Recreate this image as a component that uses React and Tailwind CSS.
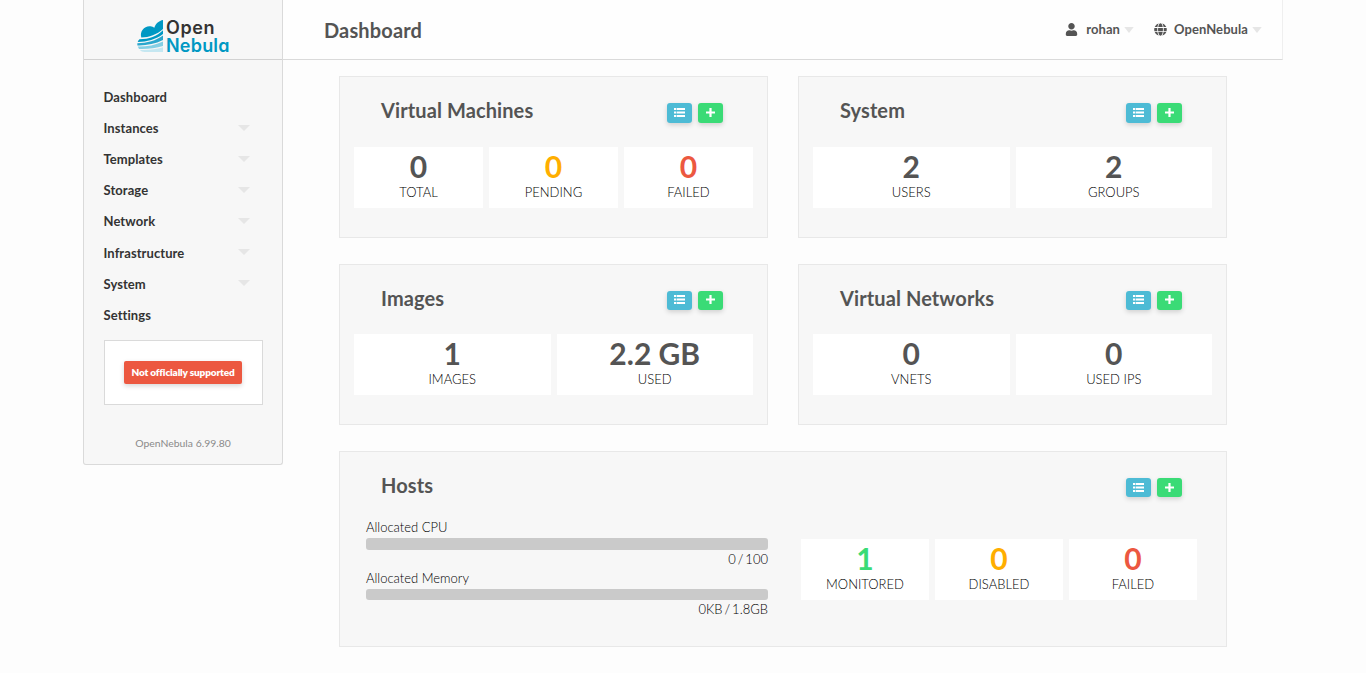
import { FaUser, FaGlobe } from "react-icons/fa";

const menu = ["Dashboard", "Instances", "Templates", "Storage", "Network", "Infrastructure", "System", "Settings"];

function Caret({ className = "" }) {
  return (
    <svg viewBox="0 0 12 6" className={"h-[6px] w-[12px] shrink-0 fill-[#e6e6e6] " + className}>
      <path d="M0 0h12L6 6z" />
    </svg>
  );
}

function Logo() {
  return (
    <div className="flex">
      <svg viewBox="0 0 26 36" className="h-[36px] w-[26px] shrink-0">
        <path d="M4.300 19.500C2.500 13 7.500 7.500 13.500 8.200C15 8.400 16.300 9 17.300 9.700C18.800 5.500 22 2.700 26 2V11C20 16.500 12 19.500 4.300 19.500z" fill="#0098c3" />
        <path d="M2.500 21.300C12 21.300 20 18.300 26 12.300V16C19 21.500 10 23.700 0.700 24C1 22.800 1.600 21.900 2.500 21.300z" fill="#0098c3" />
        <path d="M0.300 25.200C10 25 19 22.700 26 17.500V22C18 26 9 27.700 0.400 27.400z" fill="#2ba7cd" />
        <path d="M0.800 28.600C9 28.800 18 27.300 26 23.500V28C19 30.300 10 31.200 2 30.900z" fill="#85cfe4" />
        <path d="M2.800 31.900C11 32.200 19 31.500 26 29.200V34H7.500C5.500 33.800 3.900 33 2.800 31.900z" fill="#c5e7f1" />
      </svg>
      <div className="ml-[3px] pt-px font-['Inter',sans-serif] text-[18px] leading-[18px] font-semibold [font-feature-settings:'cv11']">
        <div className="tracking-[0.6px] text-[#333]">Open</div>
        <div className="tracking-[0.2px] text-[#0098c3]">Nebula</div>
      </div>
    </div>
  );
}

function ListIcon() {
  return (
    <svg viewBox="0 0 11 9" className="h-[9px] w-[11px] fill-white">
      <path d="M0 0h2v2H0zM2.600 0H11v2H2.600zM0 3.500h2v2H0zM2.600 3.500H11v2H2.600zM0 7h2v2H0zM2.600 7H11v2H2.600z" />
    </svg>
  );
}

function PlusIcon() {
  return (
    <svg viewBox="0 0 9 9" className="h-[9px] w-[9px] fill-white">
      <path d="M3.400 0h2.200v3.400H9v2.200H5.600V9H3.400V5.600H0V3.400h3.400z" />
    </svg>
  );
}

function Stat({ value, label, color = "text-[#545454]" }) {
  return (
    <div className="flex h-[61px] flex-1 flex-col items-center bg-white pt-[2px]">
      <div className={"text-[30px] leading-[34px] font-bold " + color}>{value}</div>
      <div className="mt-px text-[13px] leading-[17px] font-light text-black">{label}</div>
    </div>
  );
}

function Card({ title, className = "", button = "h-[20px] pt-[5px]", children }) {
  return (
    <section className={"border border-[#e8e8e8] bg-[#f7f7f7] " + className}>
      <div className="flex h-[46px] items-start justify-between pt-[19px] pr-[44px] pl-[41px]">
        <h2 className="text-[20px] leading-[28px] font-bold tracking-[0.1px] text-[#545454]">{title}</h2>
        <div className="mt-[7px] flex gap-[6px]">
          <button className={"flex w-[25px] items-start justify-center rounded-[3px] bg-[#4dbbd5] shadow-[0_2px_5px_rgba(0,0,0,0.16)] " + button}><ListIcon /></button>
          <button className={"flex w-[25px] items-start justify-center rounded-[3px] bg-[#3adb76] shadow-[0_2px_5px_rgba(0,0,0,0.16)] " + button}><PlusIcon /></button>
        </div>
      </div>
      {children}
    </section>
  );
}

function Stats({ className = "mt-[24px]", children }) {
  return <div className={"flex gap-[6px] px-[14px] " + className}>{children}</div>;
}

function Meter({ label, value, bar, className = "" }) {
  return (
    <div className={"text-[13px] leading-[17px] font-light text-black " + className}>
      <div>{label}</div>
      <div className={"mt-[2px] rounded-[3px] bg-[#cacaca] " + bar} />
      <div className="mt-px text-right [word-spacing:-1.5px]">{value}</div>
    </div>
  );
}

export default function App() {
  return (
    <div className="flex h-[673px] items-start overflow-hidden bg-[#fdfdfd] pl-[83px] font-['Lato',sans-serif]">
      <aside className="h-[465px] w-[200px] shrink-0 rounded-b-[3px] border-x border-b border-[#dadada] bg-[#f7f7f7]">
        <div className="h-[60px] border-b border-[#d2d2d2] pt-[18px] pl-[53px]">
          <Logo />
        </div>
        <nav className="mt-[22px] pr-5 pl-[19.500px] text-[13px] font-bold tracking-[0.08px] text-[#333]">
          {menu.map((item, i) => (
            <div key={item} className="flex h-[31.150px] items-center justify-between pr-[12px]">
              {item}
              {i > 0 && i < 7 && <Caret className="mb-[2px]" />}
            </div>
          ))}
        </nav>
        <div className="mr-[19px] ml-5 mt-[9px] flex h-[65px] items-center border border-[#dadada] bg-white pl-[19px]">
          <span className="flex h-[23px] w-[118px] items-center justify-center rounded-[2px] bg-[#ec5840] text-[10px] font-extrabold tracking-[-0.15px] whitespace-nowrap text-white shadow-[0_2px_5px_rgba(0,0,0,0.16)]">Not officially supported</span>
        </div>
        <div className="mt-[31px] text-center text-[10.400px] leading-[15px] text-[#8a8a8a]">OpenNebula 6.99.80</div>
      </aside>
      <div className="w-[1000px]">
        <header className="flex h-[60px] items-center border-r border-b border-r-[#efefef] border-b-[#dadada] bg-[#fefefe] pr-[19px] pl-[41px] text-[#545454]">
          <h1 className="flex-1 pt-px text-[20px] font-bold tracking-[0.15px]">Dashboard</h1>
          <div className="flex items-center text-[13px] font-bold tracking-[0.08px]">
            <FaUser size={13} className="mb-px" />
            <span className="ml-[8px]">rohan</span>
            <Caret className="ml-[3px] scale-x-[0.8]" />
            <FaGlobe size={13} className="mb-px ml-[19px]" />
            <span className="ml-[7px]">OpenNebula</span>
            <Caret className="ml-[3px] scale-x-[0.8]" />
          </div>
        </header>
        <main className="px-[56px] pt-[16px]">
          <div className="grid grid-cols-2 gap-x-[30px]">
            <Card title="Virtual Machines" className="h-[162px]">
              <Stats>
                <Stat value="0" label="TOTAL" />
                <Stat value="0" label="PENDING" color="text-[#ffae00]" />
                <Stat value="0" label="FAILED" color="text-[#ec5840]" />
              </Stats>
            </Card>
            <Card title="System" className="h-[162px]">
              <Stats>
                <Stat value="2" label="USERS" />
                <Stat value="2" label="GROUPS" />
              </Stats>
            </Card>
            <Card title="Images" className="mt-[26px] h-[161px]" button="h-[19px] pt-[4px]">
              <Stats className="mt-[23px]">
                <Stat value="1" label="IMAGES" />
                <Stat value="2.2 GB" label="USED" />
              </Stats>
            </Card>
            <Card title="Virtual Networks" className="mt-[26px] h-[161px]" button="h-[19px] pt-[4px]">
              <Stats className="mt-[23px]">
                <Stat value="0" label="VNETS" />
                <Stat value="0" label="USED IPS" />
              </Stats>
            </Card>
          </div>
          <Card title="Hosts" className="mt-[26px] h-[196px]" button="h-[19px] pt-[5px]">
            <div className="flex pr-[29px] pl-[26px]">
              <div className="w-[402px] pt-[21px]">
                <Meter label="Allocated CPU" value="0 / 100" bar="h-[12px]" />
                <Meter label="Allocated Memory" value="0KB / 1.8GB" bar="h-[11px]" className="mt-[2px]" />
              </div>
              <div className="mt-[41px] ml-[33px] flex flex-1 gap-[6px]">
                <Stat value="1" label="MONITORED" color="text-[#3adb76]" />
                <Stat value="0" label="DISABLED" color="text-[#ffae00]" />
                <Stat value="0" label="FAILED" color="text-[#ec5840]" />
              </div>
            </div>
          </Card>
        </main>
      </div>
    </div>
  );
}
